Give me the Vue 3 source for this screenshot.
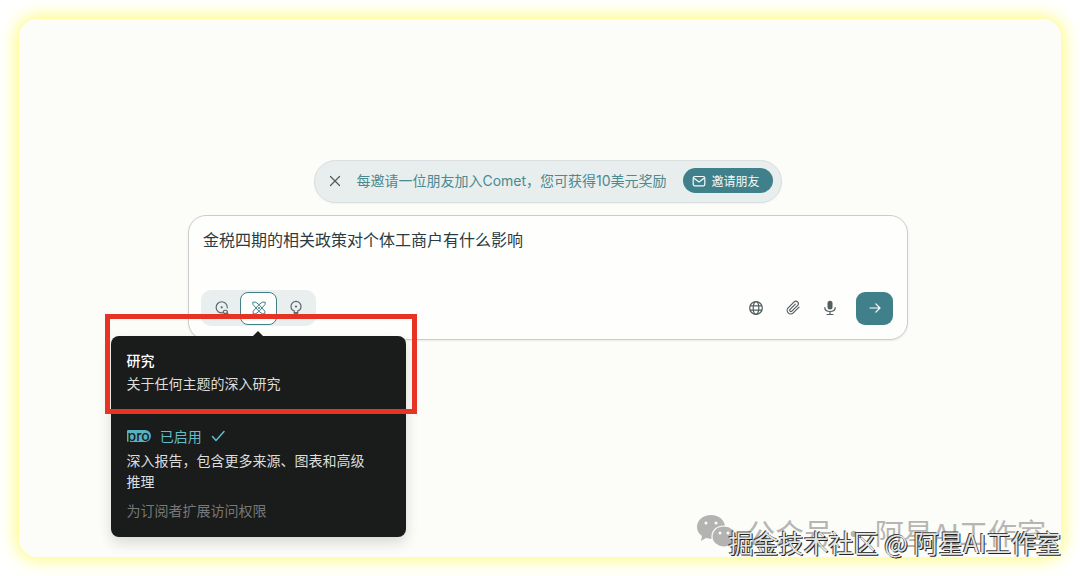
<script setup>
import { ref } from 'vue'

const query = ref('金税四期的相关政策对个体工商户有什么影响')
const mode = ref('research')
</script>

<template>
  <div class="page">
    <main class="panel">
      <div class="stack">
        <section class="invite">
          <button class="close" type="button" aria-label="关闭">
            <svg width="12" height="12" viewBox="0 0 12 12"><path d="M1.500 1.500l9 9M10.500 1.500l-9 9" /></svg>
          </button>
          <span class="invite-text">每邀请一位朋友加入Comet，您可获得10美元奖励</span>
          <button class="invite-button" type="button">
            <svg width="14" height="14" viewBox="0 0 14 14"><rect x="1.200" y="2.500" width="11.600" height="9.400" rx="1.600" /><path d="M2 4.200l5 3.800 5-3.800" /></svg>
            <span>邀请朋友</span>
          </button>
        </section>

        <form class="composer" @submit.prevent>
          <input v-model="query" class="query" type="text" aria-label="提问" />
          <div class="toolbar">
            <div class="modes">
              <button type="button" class="mode" :class="{ active: mode === 'search' }" aria-label="搜索" @click="mode = 'search'">
                <svg width="16" height="16" viewBox="0 0 16 16"><path d="M8.500 12.900A5.600 5.600 0 1 1 13.300 7.800M9.300 11.200c.8-1.300 3.200-1.300 4 0 .5 1.100-.6 2.300-2 2.300s-2.500-1.200-2-2.300zM13 13l1.500 1.500" /><circle class="dot" cx="7.700" cy="7.300" r="1.100" /></svg>
              </button>
              <div class="mode-slot">
                <button type="button" class="mode" :class="{ active: mode === 'research' }" aria-label="研究" aria-describedby="tip" @click="mode = 'research'">
                  <svg width="16" height="16" viewBox="0 0 16 16"><path d="M2.200 2.200h2.600L8 4.700l5.800 6.500v2.600h-2.600L8 11.300 2.200 4.800zM13.800 2.200h-2.600L8 4.700l-5.800 6.500v2.600h2.600L8 11.300l5.800-6.500z" /><circle class="dot" cx="8" cy="8" r="1" /></svg>
                </button>
                <aside id="tip" class="tip" role="tooltip">
                  <div class="summary">
                    <h2>研究</h2>
                    <p>关于任何主题的深入研究</p>
                  </div>
                  <div class="details">
                    <div class="status">
                      <span class="pro">pro</span>
                      <span>已启用</span>
                      <svg width="14" height="14" viewBox="0 0 14 14"><path d="M1.500 7.500l3.500 4 8-9" /></svg>
                    </div>
                    <p>深入报告，包含更多来源、图表和高级推理</p>
                    <p class="note">为订阅者扩展访问权限</p>
                  </div>
                  <div class="highlight"></div>
                </aside>
              </div>
              <button type="button" class="mode" :class="{ active: mode === 'labs' }" aria-label="实验室" @click="mode = 'labs'">
                <svg width="16" height="16" viewBox="0 0 16 16"><path d="M6.200 12.800v-2C4.300 10.200 3 8.500 3 6.400a5 5 0 0 1 10 0c0 2.100-1.300 3.800-3.200 4.400v2c0 1.600-3.600 1.600-3.600 0zM6.400 12.600h3.200" /><circle class="dot" cx="8" cy="6.500" r="1.100" /></svg>
              </button>
            </div>
            <div class="actions">
              <button type="button" class="tool" aria-label="来源">
                <svg width="16" height="16" viewBox="0 0 16 16"><circle cx="8" cy="8" r="6.300" /><ellipse cx="8" cy="8" rx="2.800" ry="6.300" /><path d="M2.300 5.800h11.400M2.300 10.200h11.400" /></svg>
              </button>
              <button type="button" class="tool" aria-label="附件">
                <svg width="16" height="16" viewBox="0 0 16 16"><path d="M14 7.200l-5.700 5.700a3.600 3.600 0 0 1-5.100-5.100l5.900-5.900a2.450 2.450 0 0 1 3.500 3.500l-5.700 5.700a1.250 1.250 0 0 1-1.800-1.800L10.300 4.100" /></svg>
              </button>
              <button type="button" class="tool" aria-label="语音">
                <svg width="16" height="16" viewBox="0 0 16 16"><rect class="solid" x="5.500" y="0.800" width="5" height="8.600" rx="2.500" /><path d="M2.800 7.500c0 5.300 10.400 5.300 10.400 0M8 11.500v3M5 14.500h6" /></svg>
              </button>
              <button type="submit" class="send" aria-label="发送">
                <svg width="14" height="14" viewBox="0 0 14 14"><path d="M2 7h10M7.800 2.800L12 7l-4.200 4.200" /></svg>
              </button>
            </div>
          </div>
        </form>
      </div>
    </main>

    <div class="account">
      <svg width="42" height="36" viewBox="0 0 42 36">
        <path class="bubble" d="M15 1C7 1 1 6 1 13c0 4 2 7 5 9l-1 5 5-3c2 .6 3 .8 5 .8 8 0 14-5 14-11.800S23 1 15 1z" />
        <path class="bubble ring" d="M28 12c-7 0-12 4.500-12 10.500S21 33 28 33c1.500 0 3-.2 4.300-.7l4.200 2.500-1-4c3-2 4.500-5 4.500-8.300C40 16.500 35 12 28 12z" />
        <path class="eyes" d="M10 9h.01M20 9h.01M24 19h.01M32 19h.01" />
      </svg>
      <span>公众号 · 阿星AI工作室</span>
    </div>
    <div class="community">掘金技术社区 @ 阿星AI工作室</div>
  </div>
</template>

<style>
body {
  margin: 0;
  background: #fff;
}
</style>

<style scoped>
* {
  box-sizing: border-box;
}

.page {
  position: relative;
  display: flex;
  min-height: 100vh;
  padding: 19px;
  overflow: hidden;
  font-family: Inter, "Noto Sans CJK SC", sans-serif;
  color: #2b3b40;
}

.panel {
  flex: 1;
  padding: 141px 153px 0 169px;
  border-radius: 18px;
  background: #fcfdf9;
  box-shadow: 0 0 18px 2px #fff96e;
}

.stack {
  display: flex;
  flex-direction: column;
  align-items: center;
  gap: 12px;
}

button {
  display: flex;
  align-items: center;
  justify-content: center;
  padding: 0;
  border: 0;
  background: none;
  font: inherit;
  color: inherit;
}

svg {
  flex: none;
  fill: none;
  stroke: currentColor;
  stroke-width: 1.2;
  stroke-linecap: round;
  stroke-linejoin: round;
}

.dot,
.solid {
  fill: currentColor;
  stroke: none;
}

.invite {
  display: flex;
  align-items: center;
  height: 43px;
  padding: 0 8px 2px 13px;
  border: 1px solid #d8dfde;
  border-radius: 22px;
  background: #e8eeed;
  box-shadow: 0 1px 2px #0000000d;
}

.close {
  width: 14px;
  height: 24px;
  color: #4d5a5d;
}

.invite-text {
  margin: 0 16px 0 14px;
  font-size: 14px;
  line-height: 20px;
  color: #4a8a90;
}

.invite-button {
  gap: 6px;
  height: 25px;
  padding: 0 13px 0 9px;
  border-radius: 13px;
  background: #3f808a;
  font-size: 12px;
  color: #f3fbfb;
}

.composer {
  width: 100%;
  padding: 11px 14px 13px 12px;
  border: 1px solid #cbcdcc;
  border-radius: 18px;
  background: #fefefd;
  box-shadow: 0 1px 2px #00000014;
}

.query {
  display: block;
  width: 100%;
  height: 24px;
  padding: 0 2px;
  border: 0;
  outline: 0;
  background: none;
  font: inherit;
  font-size: 16px;
  color: #2b3b40;
}

.toolbar {
  display: flex;
  align-items: center;
  justify-content: space-between;
  margin-top: 39px;
}

.modes {
  display: flex;
  align-items: center;
  height: 36px;
  padding: 0 2px;
  border-radius: 10px;
  background: #e8efee;
  color: #59686b;
}

.mode {
  width: 37px;
  height: 33px;
  border-radius: 8px;
}

.mode.active {
  border: 1px solid #3f808a;
  background: #fefefd;
  color: #3f808a;
}

.mode.active svg {
  stroke-width: 1;
}

.mode-slot {
  position: relative;
}

.actions {
  display: flex;
  align-items: center;
  color: #535e60;
}

.tool {
  width: 37px;
  height: 33px;
}

.send {
  width: 37px;
  height: 33px;
  margin-left: 8px;
  border-radius: 9px;
  background: #3f808a;
  color: #fff;
}

.tip {
  position: absolute;
  top: calc(100% + 11px);
  left: 50%;
  z-index: 1;
  width: 295px;
  margin-left: -148px;
  padding: 14px 30px 16px 16px;
  border-radius: 8px;
  background: #1a1b1b;
  box-shadow: 0 6px 14px #00000024;
  font-size: 14px;
  line-height: 21px;
  color: #dcdddd;
}

.tip::before {
  content: "";
  position: absolute;
  top: -5px;
  left: 50%;
  margin-left: -5px;
  border: 5px solid transparent;
  border-top: 0;
  border-bottom-color: #1a1b1b;
}

.tip h2,
.tip p {
  margin: 0;
}

.tip h2 {
  margin-bottom: 2px;
  font-size: 14px;
  font-weight: 500;
  color: #fff;
}

.details {
  margin-top: 32px;
}

.status {
  display: flex;
  align-items: center;
  gap: 9px;
  margin-bottom: 3px;
  color: #63bdca;
}

.pro {
  padding: 0 1px;
  border-radius: 1px 6px 6px 1px;
  background: #55b3c1;
  font-size: 14px;
  font-weight: 500;
  line-height: 12px;
  color: #1a1b1b;
}

.status svg {
  stroke-width: 1.5;
}

.tip .note {
  margin-top: 8px;
  color: #777878;
}

.highlight {
  position: absolute;
  top: -22px;
  left: -6px;
  right: -11px;
  height: 100px;
  border: 5px solid #e63323;
  pointer-events: none;
}

.account {
  position: absolute;
  right: 34px;
  bottom: 24px;
  display: flex;
  align-items: center;
  gap: 8px;
  font-family: "Noto Sans CJK SC", sans-serif;
  font-size: 29px;
  line-height: 40px;
  color: #b5b6b4;
}

.bubble {
  fill: #b3b4b2;
  stroke: none;
}

.bubble.ring {
  stroke: #fcfdf9;
}

.eyes {
  stroke: #fcfdf9;
  stroke-width: 3;
}

.community {
  position: absolute;
  right: 19px;
  bottom: 16px;
  font-family: "Noto Sans CJK SC", sans-serif;
  font-size: 25px;
  line-height: 36px;
  color: #e4e5e2;
  text-shadow: 1px 1px 0 #222, -1px -1px 0 #444;
}
</style>
